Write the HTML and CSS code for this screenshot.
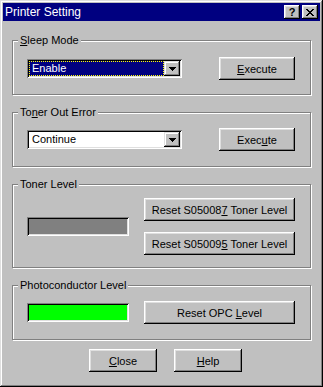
FILE: index.html
```html
<!DOCTYPE html>
<html lang="en">
<head>
    <meta charset="UTF-8">
    <meta name="viewport" content="width=device-width, initial-scale=1.0">
    <title>Printer Setting</title>
    <link rel="stylesheet" href="styles.css">
</head>
<body>
    <div class="window">
        <div class="titlebar">
            <span class="title">Printer Setting</span>
            <div class="title-buttons">
                <button class="tb-btn">?</button>
                <button class="tb-btn">
                    <svg width="8" height="7" viewBox="0 0 8 7" shape-rendering="crispEdges">
                        <path d="M0 0h2v1H0zM6 0h2v1H6zM1 1h2v1H1zM5 1h2v1H5zM2 2h4v1H2zM3 3h2v1H3zM2 4h4v1H2zM1 5h2v1H1zM5 5h2v1H5zM0 6h2v1H0zM6 6h2v1H6z" fill="#000"/>
                    </svg>
                </button>
            </div>
        </div>

        <div class="content">
            <div class="group">
                <div class="group-title"><u>S</u>leep Mode</div>
                <div class="group-body pad-a">
                    <div class="combo">
                        <div class="combo-value selected"><span>Enable</span></div>
                        <div class="combo-arrow">
                            <svg width="7" height="4" viewBox="0 0 7 4" shape-rendering="crispEdges"><path d="M0 0h7v1H0zM1 1h5v1H1zM2 2h3v1H2zM3 3h1v1H3z" fill="#000"/></svg>
                        </div>
                    </div>
                    <button class="btn btn-exec"><u>E</u>xecute</button>
                </div>
            </div>

            <div class="group">
                <div class="group-title">To<u>n</u>er Out Error</div>
                <div class="group-body pad-b">
                    <div class="combo">
                        <div class="combo-value"><span>Continue</span></div>
                        <div class="combo-arrow">
                            <svg width="7" height="4" viewBox="0 0 7 4" shape-rendering="crispEdges"><path d="M0 0h7v1H0zM1 1h5v1H1zM2 2h3v1H2zM3 3h1v1H3z" fill="#000"/></svg>
                        </div>
                    </div>
                    <button class="btn btn-exec">Exec<u>u</u>te</button>
                </div>
            </div>

            <div class="group">
                <div class="group-title">Toner Level</div>
                <div class="group-body pad-c">
                    <div class="meter meter-gray"></div>
                    <div class="btn-stack">
                        <button class="btn btn-wide">Reset S05008<u>7</u> Toner Level</button>
                        <button class="btn btn-wide">Reset S05009<u>5</u> Toner Level</button>
                    </div>
                </div>
            </div>

            <div class="group">
                <div class="group-title">Photoconductor Level</div>
                <div class="group-body pad-b">
                    <div class="meter meter-green"></div>
                    <button class="btn btn-wide">Reset OPC <u>L</u>evel</button>
                </div>
            </div>

            <div class="footer">
                <button class="btn btn-small"><u>C</u>lose</button>
                <button class="btn btn-small"><u>H</u>elp</button>
            </div>
        </div>
    </div>
</body>
</html>
```

FILE: styles.css
```css
body {
    margin: 0;
    font-family: "Liberation Sans", Arial, sans-serif;
    font-size: 11px;
    background-color: #c0c0c0;
    color: #000;
}
.window {
    box-sizing: border-box;
    width: 323px;
    height: 387px;
    padding: 3px;
    background-color: #c0c0c0;
    box-shadow: inset -1px -1px #000, inset 1px 1px #dfdfdf, inset -2px -2px #808080, inset 2px 2px #fff;
    display: flex;
    flex-direction: column;
}
.titlebar {
    height: 18px;
    background-color: #000080;
    color: #fff;
    display: flex;
    align-items: center;
    justify-content: space-between;
    padding: 0 2px 0 2px;
}
.title {
    font-size: 12px;
    line-height: 14px;
}
.title-buttons {
    display: flex;
    gap: 2px;
}
.tb-btn {
    box-sizing: border-box;
    width: 16px;
    height: 14px;
    padding: 0;
    border: none;
    background-color: #c0c0c0;
    box-shadow: inset -1px -1px #000, inset 1px 1px #fff, inset -2px -2px #808080, inset 2px 2px #dfdfdf;
    font: bold 11px "Liberation Sans", Arial, sans-serif;
    color: #000;
    display: flex;
    align-items: center;
    justify-content: center;
}
.content {
    padding: 19px 9px 0 9px;
    display: flex;
    flex-direction: column;
    gap: 17px;
}
.group {
    border: 1px solid #808080;
    box-shadow: 1px 1px 0 #fff, inset 1px 1px 0 #fff;
}
.group-title {
    width: fit-content;
    margin: -7px 0 0 5px;
    padding: 0 2px;
    line-height: 13px;
    background-color: #c0c0c0;
}
.group-body {
    display: flex;
    align-items: center;
    justify-content: space-between;
    padding-left: 14px;
    padding-right: 15px;
}
.pad-a {
    padding-top: 10px;
    padding-bottom: 14px;
}
.pad-b {
    padding-top: 9px;
    padding-bottom: 15px;
}
.pad-c {
    padding-top: 7px;
    padding-bottom: 12px;
}
.combo {
    box-sizing: border-box;
    width: 155px;
    height: 19px;
    padding: 2px;
    background-color: #fff;
    box-shadow: inset 1px 1px #808080, inset -1px -1px #fff, inset 2px 2px #000, inset -2px -2px #dfdfdf;
    display: flex;
}
.combo-value {
    flex: 1;
    display: flex;
    line-height: 13px;
}
.combo-value span {
    flex: 1;
    padding-left: 2px;
    border: 1px solid transparent;
}
.combo-value.selected span {
    background-color: #000080;
    color: #fff;
    border: 1px dotted #ffff00;
}
.combo-arrow {
    box-sizing: border-box;
    width: 16px;
    background-color: #c0c0c0;
    box-shadow: inset -1px -1px #000, inset 1px 1px #dfdfdf, inset -2px -2px #808080, inset 2px 2px #fff;
    display: flex;
    align-items: center;
    justify-content: center;
}
.btn {
    box-sizing: border-box;
    height: 23px;
    padding: 0;
    border: none;
    background-color: #c0c0c0;
    box-shadow: inset -1px -1px #000, inset 1px 1px #fff, inset -2px -2px #808080, inset 2px 2px #dfdfdf;
    font: 11px "Liberation Sans", Arial, sans-serif;
    color: #000;
}
.btn-exec {
    width: 76px;
}
.btn-wide {
    width: 151px;
}
.btn-small {
    width: 68px;
}
.btn-stack {
    display: flex;
    flex-direction: column;
    gap: 11px;
}
.meter {
    box-sizing: border-box;
    width: 102px;
    height: 19px;
    box-shadow: inset 1px 1px #808080, inset -1px -1px #fff, inset 2px 2px #000, inset -2px -2px #dfdfdf;
}
.meter-gray {
    background-color: #808080;
}
.meter-green {
    background-color: #00ff00;
}
.footer {
    display: flex;
    justify-content: center;
    gap: 17px;
    padding-left: 8px;
    margin-top: -8px;
}
```
